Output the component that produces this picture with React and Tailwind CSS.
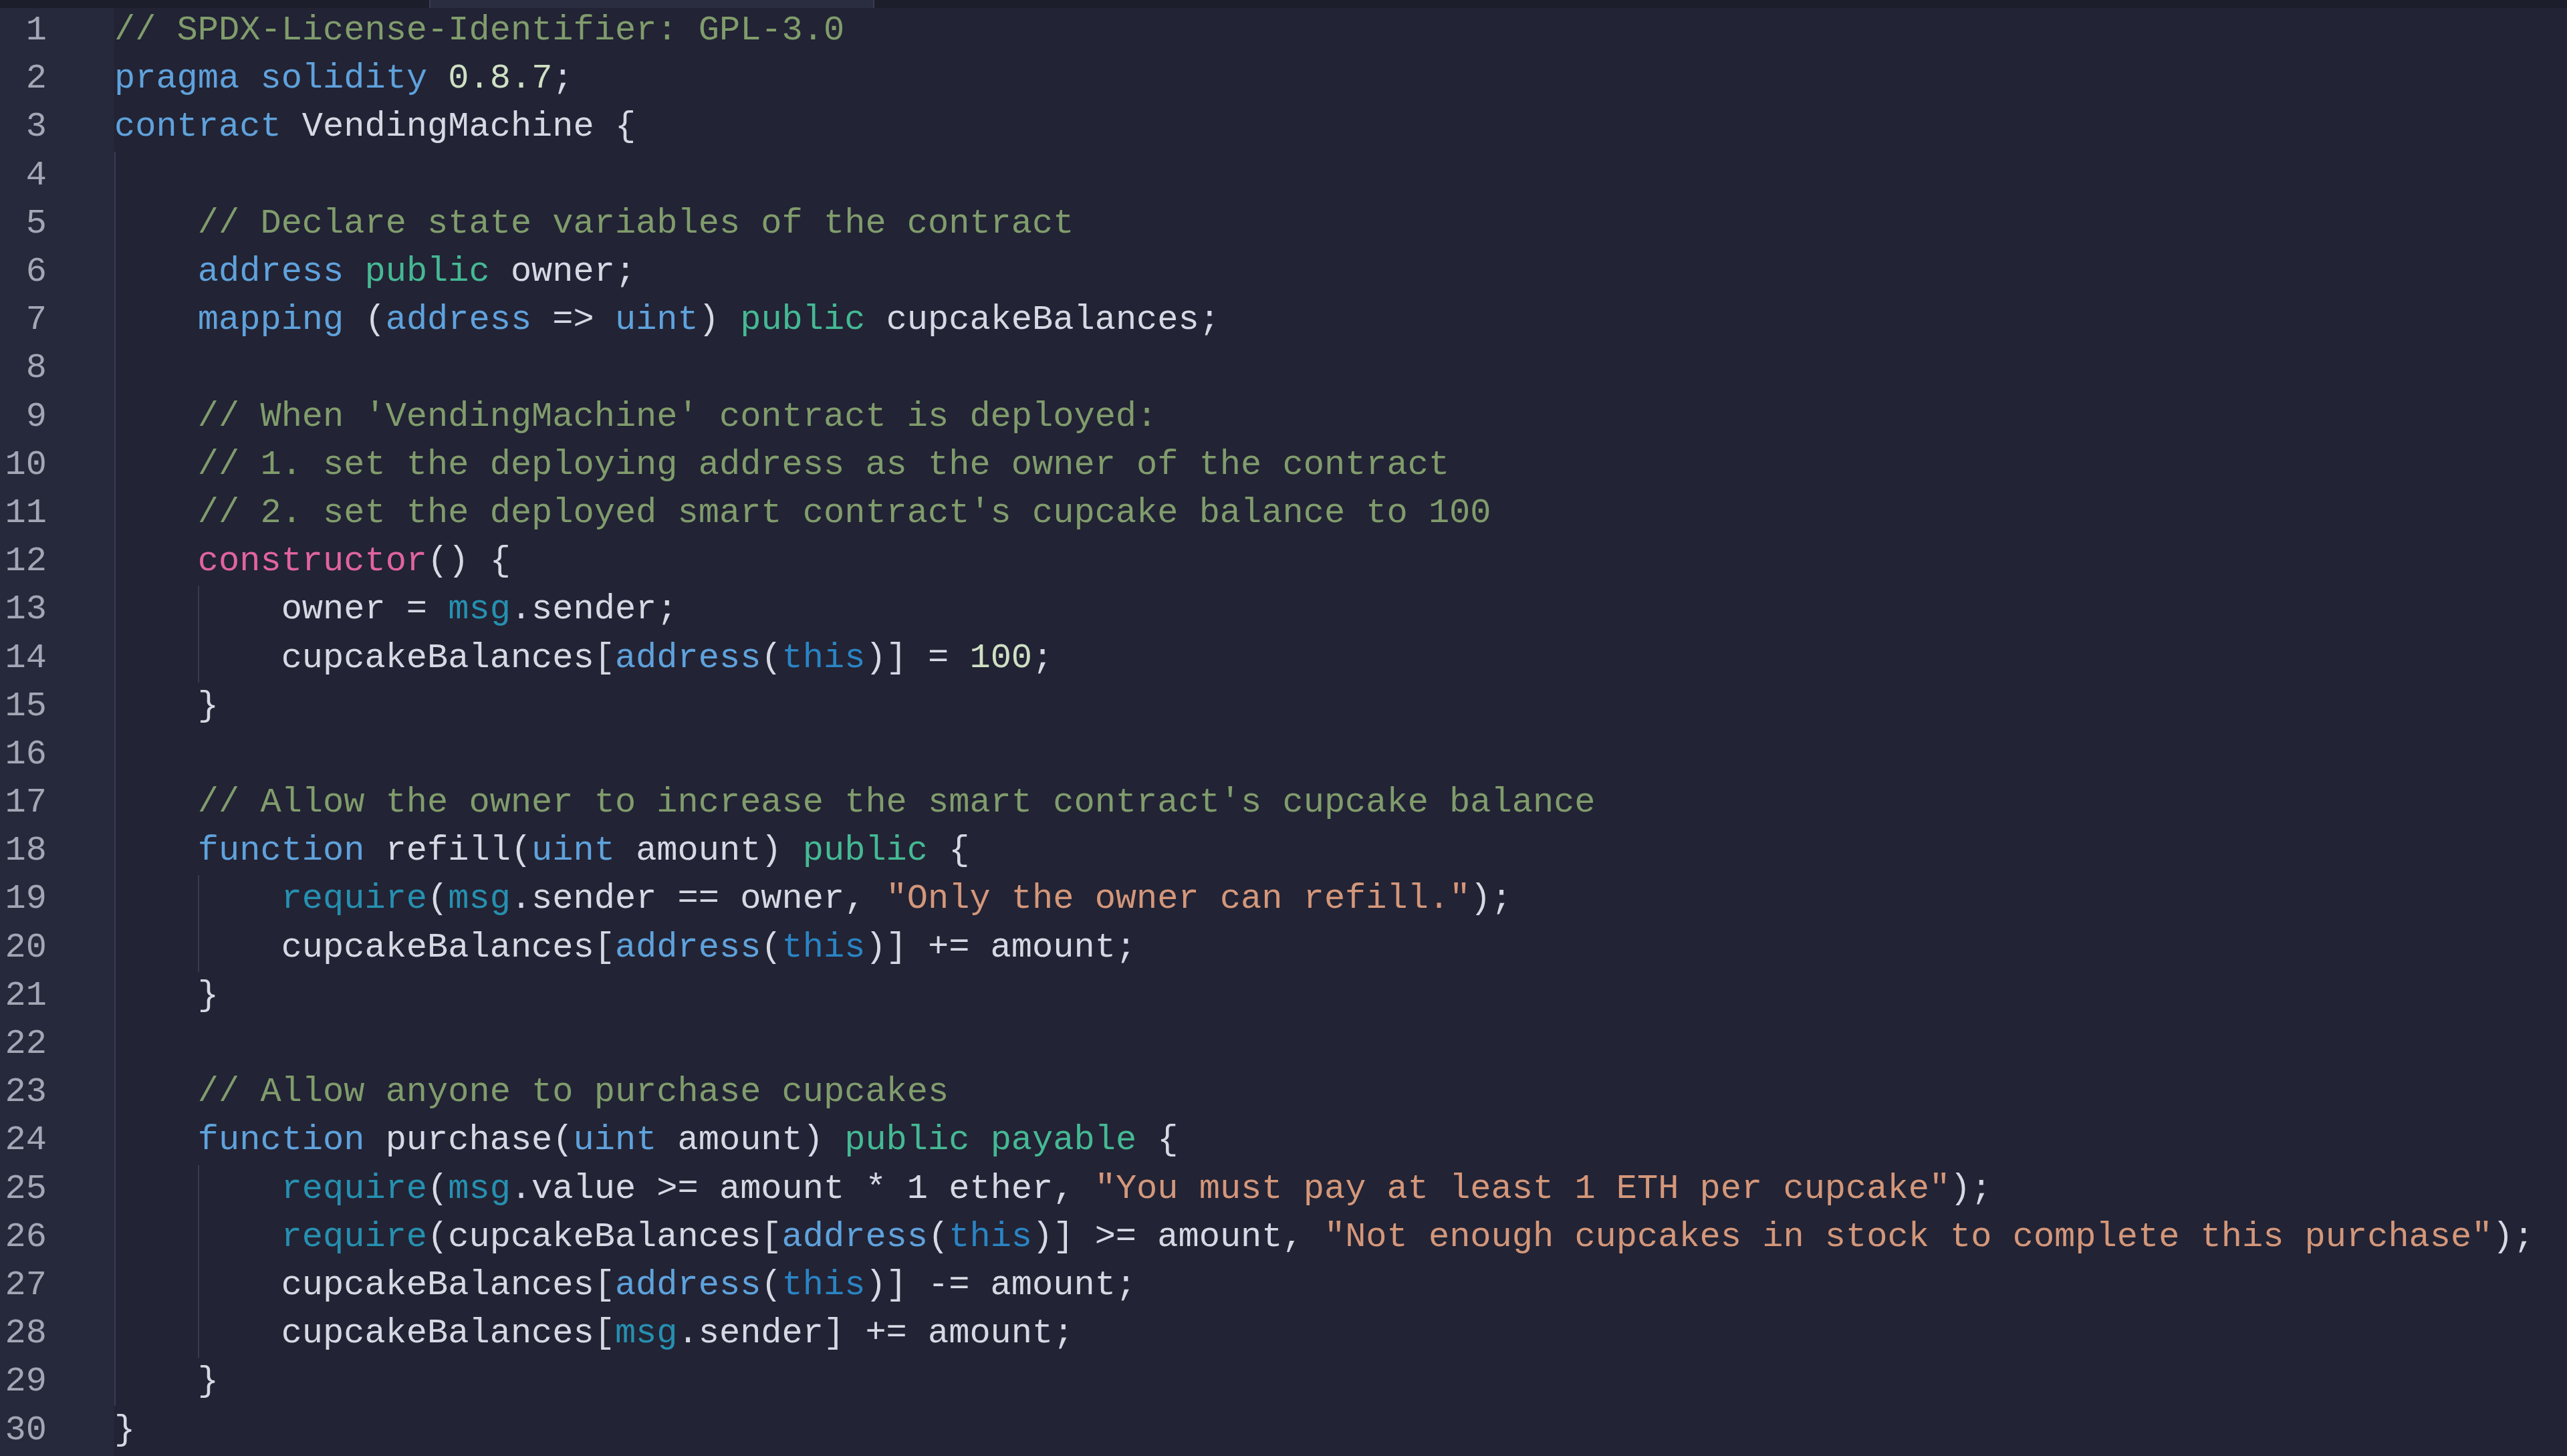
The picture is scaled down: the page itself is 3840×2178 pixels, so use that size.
import React from "react";

const COLORS = {
  c: "text-[#809c6c]",
  k: "text-[#5fa2dc]",
  m: "text-[#45b994]",
  f: "text-[#e0649f]",
  b: "text-[#2690b0]",
  t: "text-[#2a84c4]",
  s: "text-[#d4977a]",
  n: "text-[#cfe0c4]",
  p: "text-[#d6d9e4]",
};

const LINES = [
  [0, [["c", "// SPDX-License-Identifier: GPL-3.0"]]],
  [0, [["k", "pragma"], ["p", " "], ["k", "solidity"], ["p", " "], ["n", "0.8.7"], ["p", ";"]]],
  [0, [["k", "contract"], ["p", " VendingMachine {"]]],
  [1, []],
  [1, [["c", "// Declare state variables of the contract"]]],
  [1, [["k", "address"], ["p", " "], ["m", "public"], ["p", " owner;"]]],
  [1, [["k", "mapping"], ["p", " ("], ["k", "address"], ["p", " => "], ["k", "uint"], ["p", ") "], ["m", "public"], ["p", " cupcakeBalances;"]]],
  [1, []],
  [1, [["c", "// When 'VendingMachine' contract is deployed:"]]],
  [1, [["c", "// 1. set the deploying address as the owner of the contract"]]],
  [1, [["c", "// 2. set the deployed smart contract's cupcake balance to 100"]]],
  [1, [["f", "constructor"], ["p", "() {"]]],
  [2, [["p", "owner = "], ["b", "msg"], ["p", ".sender;"]]],
  [2, [["p", "cupcakeBalances["], ["k", "address"], ["p", "("], ["t", "this"], ["p", ")] = "], ["n", "100"], ["p", ";"]]],
  [1, [["p", "}"]]],
  [1, []],
  [1, [["c", "// Allow the owner to increase the smart contract's cupcake balance"]]],
  [1, [["k", "function"], ["p", " refill("], ["k", "uint"], ["p", " amount) "], ["m", "public"], ["p", " {"]]],
  [2, [["b", "require"], ["p", "("], ["b", "msg"], ["p", ".sender == owner, "], ["s", "\"Only the owner can refill.\""], ["p", ");"]]],
  [2, [["p", "cupcakeBalances["], ["k", "address"], ["p", "("], ["t", "this"], ["p", ")] += amount;"]]],
  [1, [["p", "}"]]],
  [1, []],
  [1, [["c", "// Allow anyone to purchase cupcakes"]]],
  [1, [["k", "function"], ["p", " purchase("], ["k", "uint"], ["p", " amount) "], ["m", "public"], ["p", " "], ["m", "payable"], ["p", " {"]]],
  [2, [["b", "require"], ["p", "("], ["b", "msg"], ["p", ".value >= amount * "], ["p", "1"], ["p", " ether, "], ["s", "\"You must pay at least 1 ETH per cupcake\""], ["p", ");"]]],
  [2, [["b", "require"], ["p", "(cupcakeBalances["], ["k", "address"], ["p", "("], ["t", "this"], ["p", ")] >= amount, "], ["s", "\"Not enough cupcakes in stock to complete this purchase\""], ["p", ");"]]],
  [2, [["p", "cupcakeBalances["], ["k", "address"], ["p", "("], ["t", "this"], ["p", ")] -= amount;"]]],
  [2, [["p", "cupcakeBalances["], ["b", "msg"], ["p", ".sender] += amount;"]]],
  [1, [["p", "}"]]],
  [0, [["p", "}"]]],
];

export default function App() {
  return (
    <div className="relative w-[3840px] h-[2178px] overflow-hidden bg-[#222334] font-['Liberation_Mono',monospace] text-[52px] antialiased">
      <div className="flex h-full">
        {/* gutter */}
        <div className="w-[171px] shrink-0 bg-[#26293b] pt-[10px] flex flex-col">
          {LINES.map((_, i) => (
            <div key={i} className="h-[72.2px] w-[70px] flex items-center justify-end text-[#a3a6b4] leading-none">
              {i + 1}
            </div>
          ))}
        </div>
        {/* code */}
        <div className="flex-1 pt-[10px] flex flex-col">
          {LINES.map(([indent, tokens], i) => {
            const guides = [];
            for (let g = 0; g < indent; g++) {
              guides.push(
                <span key={g} className="w-[4ch] shrink-0 self-stretch border-l-2 border-[#383b50]" />
              );
            }
            return (
              <div key={i} className="h-[72.2px] flex items-stretch whitespace-pre">
                {guides}
                <span className="flex items-center leading-none">
                  {tokens.map(([type, text], j) => (
                    <span key={j} className={COLORS[type]}>
                      {text}
                    </span>
                  ))}
                </span>
              </div>
            );
          })}
        </div>
      </div>
      {/* top scroll shadow strip */}
      <div className="absolute left-0 top-0 w-full h-[12px] bg-[#1d1e2b]" />
      <div className="absolute left-[642px] top-0 w-[666px] h-[12px] bg-[#2a2c3f] border-x-2 border-[#3a3c52]" />
    </div>
  );
}
